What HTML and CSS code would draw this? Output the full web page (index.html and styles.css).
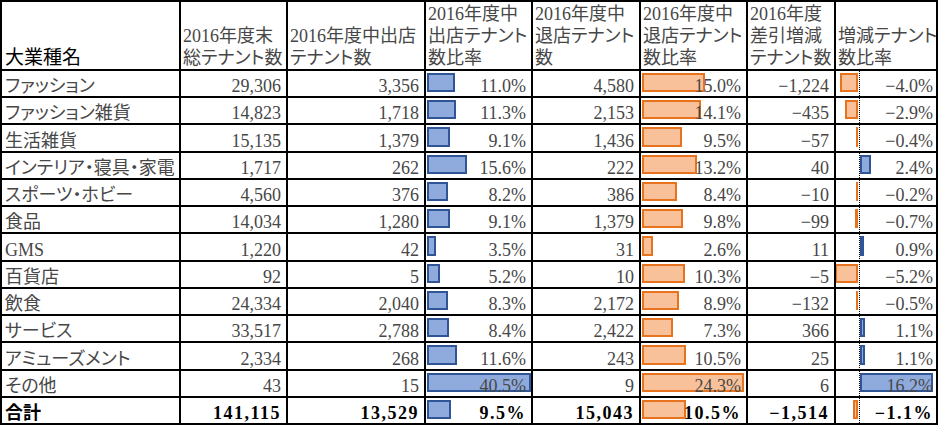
FILE: index.html
```html
<!DOCTYPE html>
<html lang="ja">
<head>
<meta charset="utf-8">
<title>大業種別テナント数</title>
<link rel="stylesheet" href="styles.css">
</head>
<body>
<div class="sheet">
  <div class="c h name-h">大業種名</div>
  <div class="c h">2016年度末<br>総テナント数</div>
  <div class="c h">2016年度中出店<br>テナント数</div>
  <div class="c h">2016年度中<br>出店テナント<br>数比率</div>
  <div class="c h">2016年度中<br>退店テナント<br>数</div>
  <div class="c h">2016年度中<br>退店テナント<br>数比率</div>
  <div class="c h">2016年度<br>差引増減<br>テナント数</div>
  <div class="c h">増減テナント<br>数比率</div>

  <div class="c">ファッション</div>
  <div class="c num">29,306</div>
  <div class="c num">3,356</div>
  <div class="c num"><span class="bar blue" style="width:28px"></span><span class="v">11.0%</span></div>
  <div class="c num">4,580</div>
  <div class="c num"><span class="bar orange" style="width:63px"></span><span class="v">15.0%</span></div>
  <div class="c num">−1,224</div>
  <div class="c num last axis"><span class="bar neg" style="width:18px"></span><span class="v">−4.0%</span></div>

  <div class="c">ファッション雑貨</div>
  <div class="c num">14,823</div>
  <div class="c num">1,718</div>
  <div class="c num"><span class="bar blue" style="width:29px"></span><span class="v">11.3%</span></div>
  <div class="c num">2,153</div>
  <div class="c num"><span class="bar orange" style="width:59px"></span><span class="v">14.1%</span></div>
  <div class="c num">−435</div>
  <div class="c num last axis"><span class="bar neg" style="width:13px"></span><span class="v">−2.9%</span></div>

  <div class="c">生活雑貨</div>
  <div class="c num">15,135</div>
  <div class="c num">1,379</div>
  <div class="c num"><span class="bar blue" style="width:23px"></span><span class="v">9.1%</span></div>
  <div class="c num">1,436</div>
  <div class="c num"><span class="bar orange" style="width:40px"></span><span class="v">9.5%</span></div>
  <div class="c num">−57</div>
  <div class="c num last axis"><span class="bar neg" style="width:2px"></span><span class="v">−0.4%</span></div>

  <div class="c">インテリア・寝具・家電</div>
  <div class="c num">1,717</div>
  <div class="c num">262</div>
  <div class="c num"><span class="bar blue" style="width:40px"></span><span class="v">15.6%</span></div>
  <div class="c num">222</div>
  <div class="c num"><span class="bar orange" style="width:55px"></span><span class="v">13.2%</span></div>
  <div class="c num">40</div>
  <div class="c num last axis"><span class="bar pos" style="width:11px"></span><span class="v">2.4%</span></div>

  <div class="c">スポーツ・ホビー</div>
  <div class="c num">4,560</div>
  <div class="c num">376</div>
  <div class="c num"><span class="bar blue" style="width:21px"></span><span class="v">8.2%</span></div>
  <div class="c num">386</div>
  <div class="c num"><span class="bar orange" style="width:35px"></span><span class="v">8.4%</span></div>
  <div class="c num">−10</div>
  <div class="c num last axis"><span class="bar neg" style="width:2px"></span><span class="v">−0.2%</span></div>

  <div class="c">食品</div>
  <div class="c num">14,034</div>
  <div class="c num">1,280</div>
  <div class="c num"><span class="bar blue" style="width:23px"></span><span class="v">9.1%</span></div>
  <div class="c num">1,379</div>
  <div class="c num"><span class="bar orange" style="width:41px"></span><span class="v">9.8%</span></div>
  <div class="c num">−99</div>
  <div class="c num last axis"><span class="bar neg" style="width:3px"></span><span class="v">−0.7%</span></div>

  <div class="c">GMS</div>
  <div class="c num">1,220</div>
  <div class="c num">42</div>
  <div class="c num"><span class="bar blue" style="width:9px"></span><span class="v">3.5%</span></div>
  <div class="c num">31</div>
  <div class="c num"><span class="bar orange" style="width:11px"></span><span class="v">2.6%</span></div>
  <div class="c num">11</div>
  <div class="c num last axis"><span class="bar pos" style="width:4px"></span><span class="v">0.9%</span></div>

  <div class="c">百貨店</div>
  <div class="c num">92</div>
  <div class="c num">5</div>
  <div class="c num"><span class="bar blue" style="width:13px"></span><span class="v">5.2%</span></div>
  <div class="c num">10</div>
  <div class="c num"><span class="bar orange" style="width:43px"></span><span class="v">10.3%</span></div>
  <div class="c num">−5</div>
  <div class="c num last axis"><span class="bar neg" style="width:23px"></span><span class="v">−5.2%</span></div>

  <div class="c">飲食</div>
  <div class="c num">24,334</div>
  <div class="c num">2,040</div>
  <div class="c num"><span class="bar blue" style="width:21px"></span><span class="v">8.3%</span></div>
  <div class="c num">2,172</div>
  <div class="c num"><span class="bar orange" style="width:37px"></span><span class="v">8.9%</span></div>
  <div class="c num">−132</div>
  <div class="c num last axis"><span class="bar neg" style="width:2px"></span><span class="v">−0.5%</span></div>

  <div class="c">サービス</div>
  <div class="c num">33,517</div>
  <div class="c num">2,788</div>
  <div class="c num"><span class="bar blue" style="width:22px"></span><span class="v">8.4%</span></div>
  <div class="c num">2,422</div>
  <div class="c num"><span class="bar orange" style="width:31px"></span><span class="v">7.3%</span></div>
  <div class="c num">366</div>
  <div class="c num last axis"><span class="bar pos" style="width:5px"></span><span class="v">1.1%</span></div>

  <div class="c">アミューズメント</div>
  <div class="c num">2,334</div>
  <div class="c num">268</div>
  <div class="c num"><span class="bar blue" style="width:30px"></span><span class="v">11.6%</span></div>
  <div class="c num">243</div>
  <div class="c num"><span class="bar orange" style="width:44px"></span><span class="v">10.5%</span></div>
  <div class="c num">25</div>
  <div class="c num last axis"><span class="bar pos" style="width:5px"></span><span class="v">1.1%</span></div>

  <div class="c">その他</div>
  <div class="c num">43</div>
  <div class="c num">15</div>
  <div class="c num"><span class="bar blue" style="width:104px"></span><span class="v">40.5%</span></div>
  <div class="c num">9</div>
  <div class="c num"><span class="bar orange" style="width:102px"></span><span class="v">24.3%</span></div>
  <div class="c num">6</div>
  <div class="c num last axis"><span class="bar pos" style="width:73px"></span><span class="v">16.2%</span></div>

  <div class="c tot-name">合計</div>
  <div class="c num tot">141,115</div>
  <div class="c num tot">13,529</div>
  <div class="c num tot"><span class="bar blue" style="width:24px"></span><span class="v">9.5%</span></div>
  <div class="c num tot">15,043</div>
  <div class="c num tot"><span class="bar orange" style="width:44px"></span><span class="v">10.5%</span></div>
  <div class="c num tot">−1,514</div>
  <div class="c num tot last axis"><span class="bar neg" style="width:5px"></span><span class="v">−1.1%</span></div>
</div>
</body>
</html>
```
FILE: styles.css
```css
html, body {
  margin: 0;
  padding: 0;
  background: #ffffff;
}

.sheet {
  display: grid;
  grid-template-columns: 177px 105px 136px 105px 106px 105px 86px 100px;
  grid-template-rows: 67px repeat(13, 1fr);
  gap: 2px;
  padding: 2px;
  width: 938px;
  height: 425px;
  box-sizing: border-box;
  background: #000000;
  font-family: "Liberation Serif", "Noto Sans CJK JP", serif;
  font-size: 18px;
  line-height: 20px;
  color: #474747;
  font-feature-settings: "palt";
}

.c {
  background: #ffffff;
  display: flex;
  flex-direction: column;
  justify-content: flex-end;
  padding: 0 5px 0 3px;
  position: relative;
  white-space: nowrap;
  overflow: hidden;
}

.h {
  line-height: 22px;
  padding: 0 0 0 2px;
}

.name-h {
  color: #000000;
  font-size: 19px;
  padding-left: 3px;
}

.num {
  text-align: right;
}

.last {
  padding-right: 3px;
}

.tot {
  color: #000000;
  font-weight: bold;
  letter-spacing: 1.5px;
}

.tot-name {
  color: #000000;
  font-weight: bold;
}

.bar {
  position: absolute;
  top: 2px;
  bottom: 4px;
}

.blue {
  left: 1px;
  background: #8faadc;
  box-shadow: inset 0 0 0 2px #2f5597;
}

.orange {
  left: 1px;
  background: #f8c19a;
  box-shadow: inset 0 0 0 2px #e8731f;
}

.axis::before {
  content: "";
  position: absolute;
  left: 23px;
  top: 0;
  bottom: 0;
  width: 1px;
  background: repeating-linear-gradient(to bottom, #000000 0, #000000 1px, transparent 1px, transparent 2px);
}

.neg {
  right: 78px;
  background: #f8c19a;
  box-shadow: inset 0 0 0 2px #e8731f;
}

.pos {
  left: 24px;
  background: #8faadc;
  box-shadow: inset 0 0 0 2px #2f5597;
}

.v {
  position: relative;
}
```
